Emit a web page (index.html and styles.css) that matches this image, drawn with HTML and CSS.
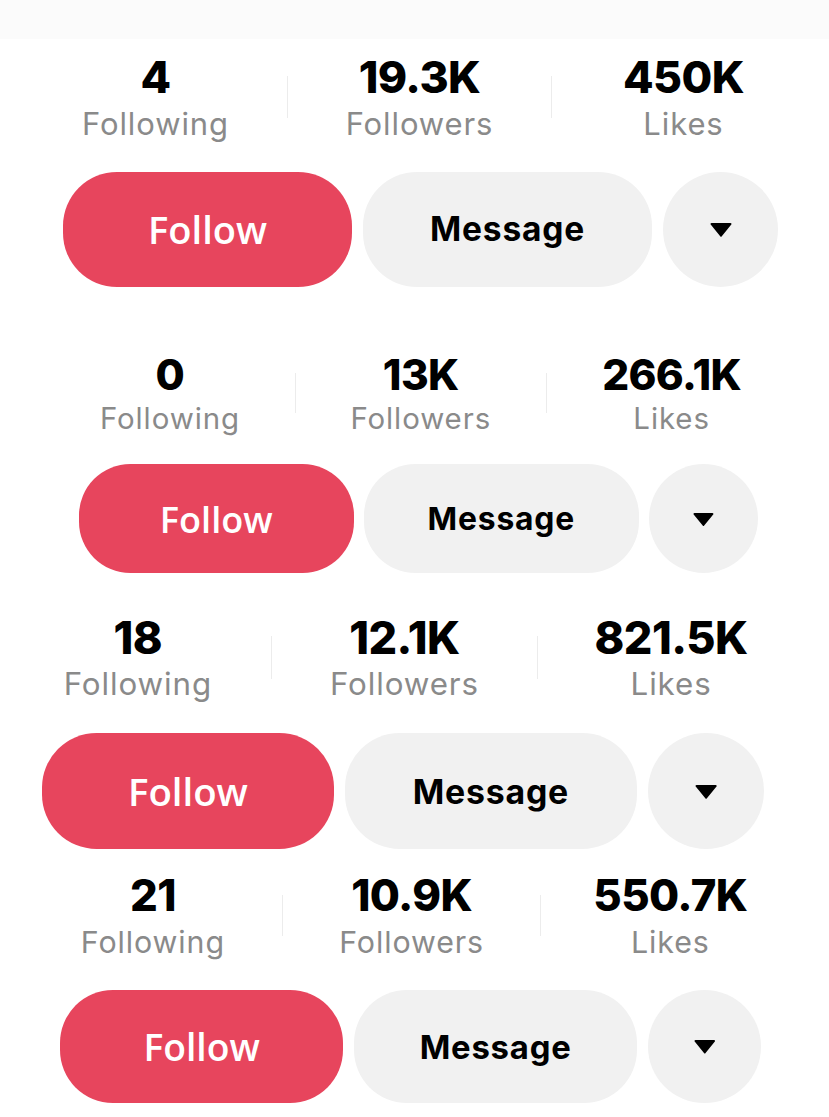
FILE: index.html
```html
<html>

<head>
    <link rel="stylesheet" href="styles.css">
</head>

<body>
    <div class="topbar"></div>

    <section class="profile profile--one">
        <div class="stats">
            <div class="stat"><strong class="stat__num">4</strong><span class="stat__label">Following</span></div>
            <span class="stats__divider"></span>
            <div class="stat"><strong class="stat__num">19.3K</strong><span class="stat__label">Followers</span></div>
            <span class="stats__divider"></span>
            <div class="stat"><strong class="stat__num">450K</strong><span class="stat__label">Likes</span></div>
        </div>
        <div class="actions">
            <button class="btn btn--follow">Follow</button>
            <button class="btn btn--message">Message</button>
            <button class="btn btn--more"><svg viewBox="0 0 22 15"><path d="M1.5 1h19a1 1 0 0 1 .8 1.6l-9.5 11.6a1 1 0 0 1-1.6 0L.7 2.6A1 1 0 0 1 1.5 1z"/></svg></button>
        </div>
    </section>

    <section class="profile profile--two">
        <div class="stats">
            <div class="stat"><strong class="stat__num">0</strong><span class="stat__label">Following</span></div>
            <span class="stats__divider"></span>
            <div class="stat"><strong class="stat__num">13K</strong><span class="stat__label">Followers</span></div>
            <span class="stats__divider"></span>
            <div class="stat"><strong class="stat__num">266.1K</strong><span class="stat__label">Likes</span></div>
        </div>
        <div class="actions">
            <button class="btn btn--follow">Follow</button>
            <button class="btn btn--message">Message</button>
            <button class="btn btn--more"><svg viewBox="0 0 22 15"><path d="M1.5 1h19a1 1 0 0 1 .8 1.6l-9.5 11.6a1 1 0 0 1-1.6 0L.7 2.6A1 1 0 0 1 1.5 1z"/></svg></button>
        </div>
    </section>

    <section class="profile profile--three">
        <div class="stats">
            <div class="stat"><strong class="stat__num">18</strong><span class="stat__label">Following</span></div>
            <span class="stats__divider"></span>
            <div class="stat"><strong class="stat__num">12.1K</strong><span class="stat__label">Followers</span></div>
            <span class="stats__divider"></span>
            <div class="stat"><strong class="stat__num">821.5K</strong><span class="stat__label">Likes</span></div>
        </div>
        <div class="actions">
            <button class="btn btn--follow">Follow</button>
            <button class="btn btn--message">Message</button>
            <button class="btn btn--more"><svg viewBox="0 0 22 15"><path d="M1.5 1h19a1 1 0 0 1 .8 1.6l-9.5 11.6a1 1 0 0 1-1.6 0L.7 2.6A1 1 0 0 1 1.5 1z"/></svg></button>
        </div>
    </section>

    <section class="profile profile--four">
        <div class="stats">
            <div class="stat"><strong class="stat__num">21</strong><span class="stat__label">Following</span></div>
            <span class="stats__divider"></span>
            <div class="stat"><strong class="stat__num">10.9K</strong><span class="stat__label">Followers</span></div>
            <span class="stats__divider"></span>
            <div class="stat"><strong class="stat__num">550.7K</strong><span class="stat__label">Likes</span></div>
        </div>
        <div class="actions">
            <button class="btn btn--follow">Follow</button>
            <button class="btn btn--message">Message</button>
            <button class="btn btn--more"><svg viewBox="0 0 22 15"><path d="M1.5 1h19a1 1 0 0 1 .8 1.6l-9.5 11.6a1 1 0 0 1-1.6 0L.7 2.6A1 1 0 0 1 1.5 1z"/></svg></button>
        </div>
    </section>
</body>

</html>
```

FILE: styles.css
```css
body {
    margin: 0;
    background: #fff;
    font-family: Inter, "Open Sans", "Liberation Sans", sans-serif;
    color: #000;
    overflow: hidden;
}

.topbar {
    height: 39px;
    background: #fbfbfb;
}

/* each block is a separate capture, so each gets its own scale and offsets */
.profile {
    --s: 1;
    --stats-left: 24px;
    --btn-left: 63px;
    --btn-gap: 29px;
}

.profile--one {
    padding-top: 12px;
}

.profile--two {
    --s: 0.95;
    --stats-left: 45px;
    --btn-left: 79px;
    margin-top: 63px;
}

.profile--three {
    --s: 1.01;
    --stats-left: 5px;
    --btn-left: 42px;
    margin-top: 38px;
}

.profile--four {
    --s: 0.98;
    --stats-left: 24px;
    --btn-left: 60px;
    --btn-gap: 31px;
    margin-top: 21px;
}

.stats {
    display: flex;
    padding-left: var(--stats-left);
}

.stat {
    display: flex;
    flex-direction: column;
    align-items: center;
    width: calc(263px * var(--s));
}

.stat__num {
    font-size: calc(44.5px * var(--s));
    line-height: 1.2;
    font-weight: 800;
    letter-spacing: -0.6px;
}

.stat__label {
    margin-top: calc(1px * var(--s));
    font-size: calc(31px * var(--s));
    line-height: 1.2;
    color: #8a8a8a;
    letter-spacing: 0.9px;
}

.stats__divider {
    align-self: center;
    width: 1px;
    height: calc(42px * var(--s));
    background: #ececec;
}

.actions {
    display: flex;
    gap: calc(11px * var(--s));
    padding-left: var(--btn-left);
    margin-top: calc(var(--btn-gap) * var(--s));
}

.btn {
    display: flex;
    align-items: center;
    justify-content: center;
    height: calc(115px * var(--s));
    border: 0;
    padding: 0;
    border-radius: calc(54px * var(--s));
    font-family: inherit;
    cursor: pointer;
}

.btn--follow {
    width: calc(289px * var(--s));
    background: #e7455d;
    color: #fff;
    font-family: "Open Sans", Inter, sans-serif;
    font-size: calc(38px * var(--s));
    font-weight: 600;
}

.btn--message {
    width: calc(289px * var(--s));
    background: #f1f1f1;
    color: #000;
    font-size: calc(33.5px * var(--s));
    font-weight: 700;
    letter-spacing: 0.8px;
}

.btn--more {
    width: calc(115px * var(--s));
    border-radius: 50%;
    background: #f1f1f1;
}

.btn--more svg {
    width: calc(22px * var(--s));
    height: calc(15px * var(--s));
    fill: #000;
}
```
